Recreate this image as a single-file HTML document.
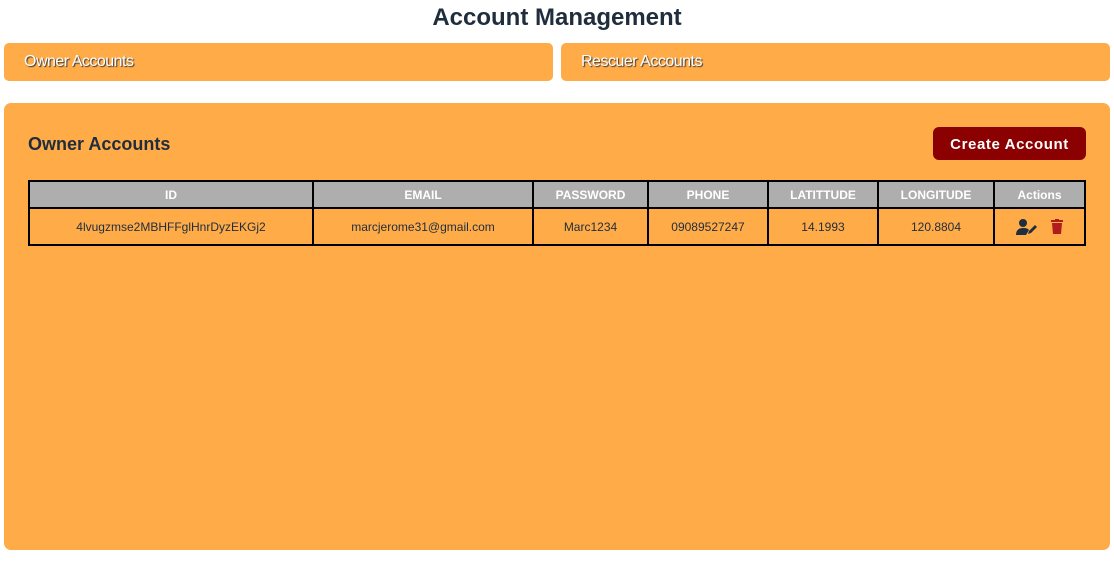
<!DOCTYPE html>
<html><head><style>
body{margin:0;width:1114px;height:561px;background:#fff;font-family:"Liberation Sans",Arial,sans-serif;position:relative;overflow:hidden}
h1{position:absolute;top:4px;left:0;width:1114px;text-align:center;margin:0;font-size:24px;color:#1f2d3d;font-weight:bold}
.tab{position:absolute;top:43px;height:38px;background:#ffab48;border-radius:5px;color:#fff;font-size:16px;line-height:37px;text-shadow:1px 1px 1px #333;letter-spacing:-0.5px}
.panel{position:absolute;left:4px;top:103px;width:1106px;height:447px;background:#ffab48;border-radius:7px}
.h2{position:absolute;left:24px;top:31px;font-size:18px;font-weight:bold;color:#1f2d3d}
.btn{position:absolute;left:929px;top:24px;width:153px;height:33px;background:#8b0000;border-radius:6px;color:#fff;font-weight:bold;font-size:15px;text-align:center;line-height:35px;letter-spacing:.6px}
table{position:absolute;left:24px;top:77px;border-collapse:collapse;font-size:12px;color:#1f2d3d}
td,th{border:2px solid #000;text-align:center;padding:0}
th{background:#aeaeae;color:#fff;height:25px;font-size:12px}
td{height:35px}
</style></head><body>
<h1>Account Management</h1>
<div class="tab" style="left:4px;width:549px"><span style="margin-left:20px">Owner Accounts</span></div>
<div class="tab" style="left:561px;width:549px"><span style="margin-left:20px">Rescuer Accounts</span></div>
<div class="panel">
<div class="h2">Owner Accounts</div>
<div class="btn">Create Account</div>
<table>
<tr><th style="width:282px">ID</th><th style="width:218px">EMAIL</th><th style="width:113px">PASSWORD</th><th style="width:118px">PHONE</th><th style="width:108px">LATITTUDE</th><th style="width:114px">LONGITUDE</th><th style="width:89px">Actions</th></tr>
<tr><td>4lvugzmse2MBHFFglHnrDyzEKGj2</td><td>marcjerome31@gmail.com</td><td>Marc1234</td><td>09089527247</td><td>14.1993</td><td>120.8804</td><td>
<svg width="22" height="16" viewBox="0 0 22 16" style="vertical-align:middle"><circle cx="7" cy="4" r="4" fill="#1f2d3d"/><path d="M0 16c0-5 3-7 7-7s5 1 6 2l-3 5z" fill="#1f2d3d"/><path d="M12 15l1-3 6-6 2 2-6 6z" fill="#1f2d3d"/></svg>
<svg width="12" height="15" viewBox="0 0 12 15" style="vertical-align:middle;margin-left:10px"><rect x="0" y="1" width="12" height="2" fill="#b01c1c"/><rect x="4" y="0" width="4" height="2" fill="#b01c1c"/><path d="M1 4h10l-1 11H2z" fill="#b01c1c"/></svg>
</td></tr>
</table>
</div>
</body></html>
